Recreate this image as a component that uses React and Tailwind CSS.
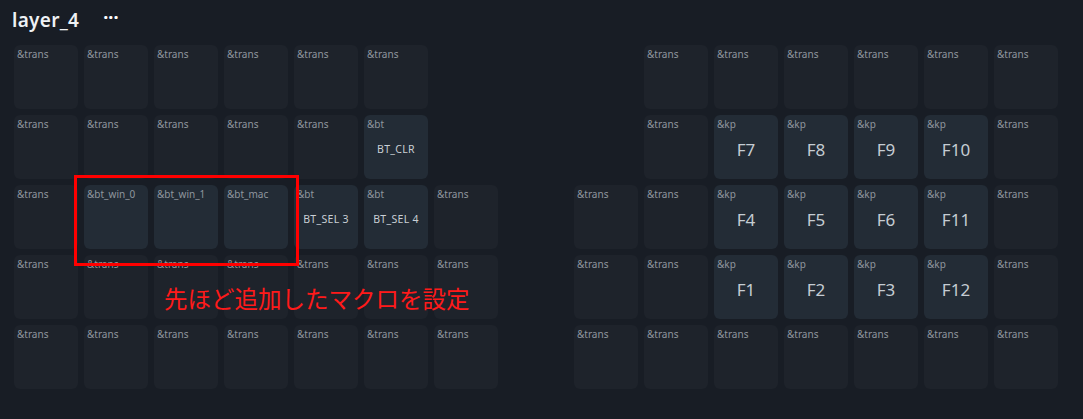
import React from 'react';

const T = { b: '&trans' };
const kp = (l) => ({ b: '&kp', l, big: true });
const bt = (b, l) => ({ b, l });

// 15 columns per row, null = no key
const rows = [
  [T, T, T, T, T, T, null, null, null, T, T, T, T, T, T],
  [T, T, T, T, T, bt('&bt', 'BT_CLR'), null, null, null, T, kp('F7'), kp('F8'), kp('F9'), kp('F10'), T],
  [T, bt('&bt_win_0'), bt('&bt_win_1'), bt('&bt_mac'), bt('&bt', 'BT_SEL 3'), bt('&bt', 'BT_SEL 4'), T, null, T, T, kp('F4'), kp('F5'), kp('F6'), kp('F11'), T],
  [T, T, T, T, T, T, T, null, T, T, kp('F1'), kp('F2'), kp('F3'), kp('F12'), T],
  [T, T, T, T, T, T, T, null, T, T, T, T, T, T, T],
];

function Key({ k }) {
  if (!k) return <div />;
  const active = k.b !== '&trans';
  return (
    <div
      className={`h-16 rounded-md flex flex-col px-[3px] pt-[3px] ${
        active ? 'bg-[#232c36]' : 'bg-[#1e232b]'
      }`}
    >
      <span className="text-[10px] leading-[12px] text-[#8f969e] whitespace-nowrap">{k.b}</span>
      {k.l && (
        <div className="flex-1 flex items-center justify-center pb-[10px]">
          <span
            className={
              k.big
                ? 'text-[17px] text-[#c5ccd3]'
                : 'text-[10.5px] text-[#c9cfd5] tracking-[0.3px]'
            }
          >
            {k.l}
          </span>
        </div>
      )}
    </div>
  );
}

export default function App() {
  return (
    <div
      className="w-[1083px] h-[419px] bg-[#181d25] overflow-hidden"
      style={{ fontFamily: '"Noto Sans", "Noto Sans CJK JP", sans-serif' }}
    >
      <div className="flex items-center h-[44px] pl-[12px] pb-[4px]">
        <span className="text-[19px] font-semibold text-[#eef1f4] tracking-[0.3px]">layer_4</span>
        <span className="ml-[24px] text-[18px] font-bold text-white leading-none -mt-[6px]">···</span>
      </div>
      <div className="relative pl-[14px] pt-[1px]">
        <div className="grid grid-cols-[repeat(15,64px)] auto-rows-[64px] gap-[6px]">
          {rows.map((r, i) => r.map((k, j) => <Key key={`${i}-${j}`} k={k} />))}
        </div>
        <div className="absolute left-[74px] top-[131px] w-[225px] h-[91px] border-[3px] border-[#ff0000]" />
        <div className="absolute left-[164px] top-[244px] text-[23.5px] leading-none text-[#ff1a1a] whitespace-nowrap">
          先ほど追加したマクロを設定
        </div>
      </div>
    </div>
  );
}
